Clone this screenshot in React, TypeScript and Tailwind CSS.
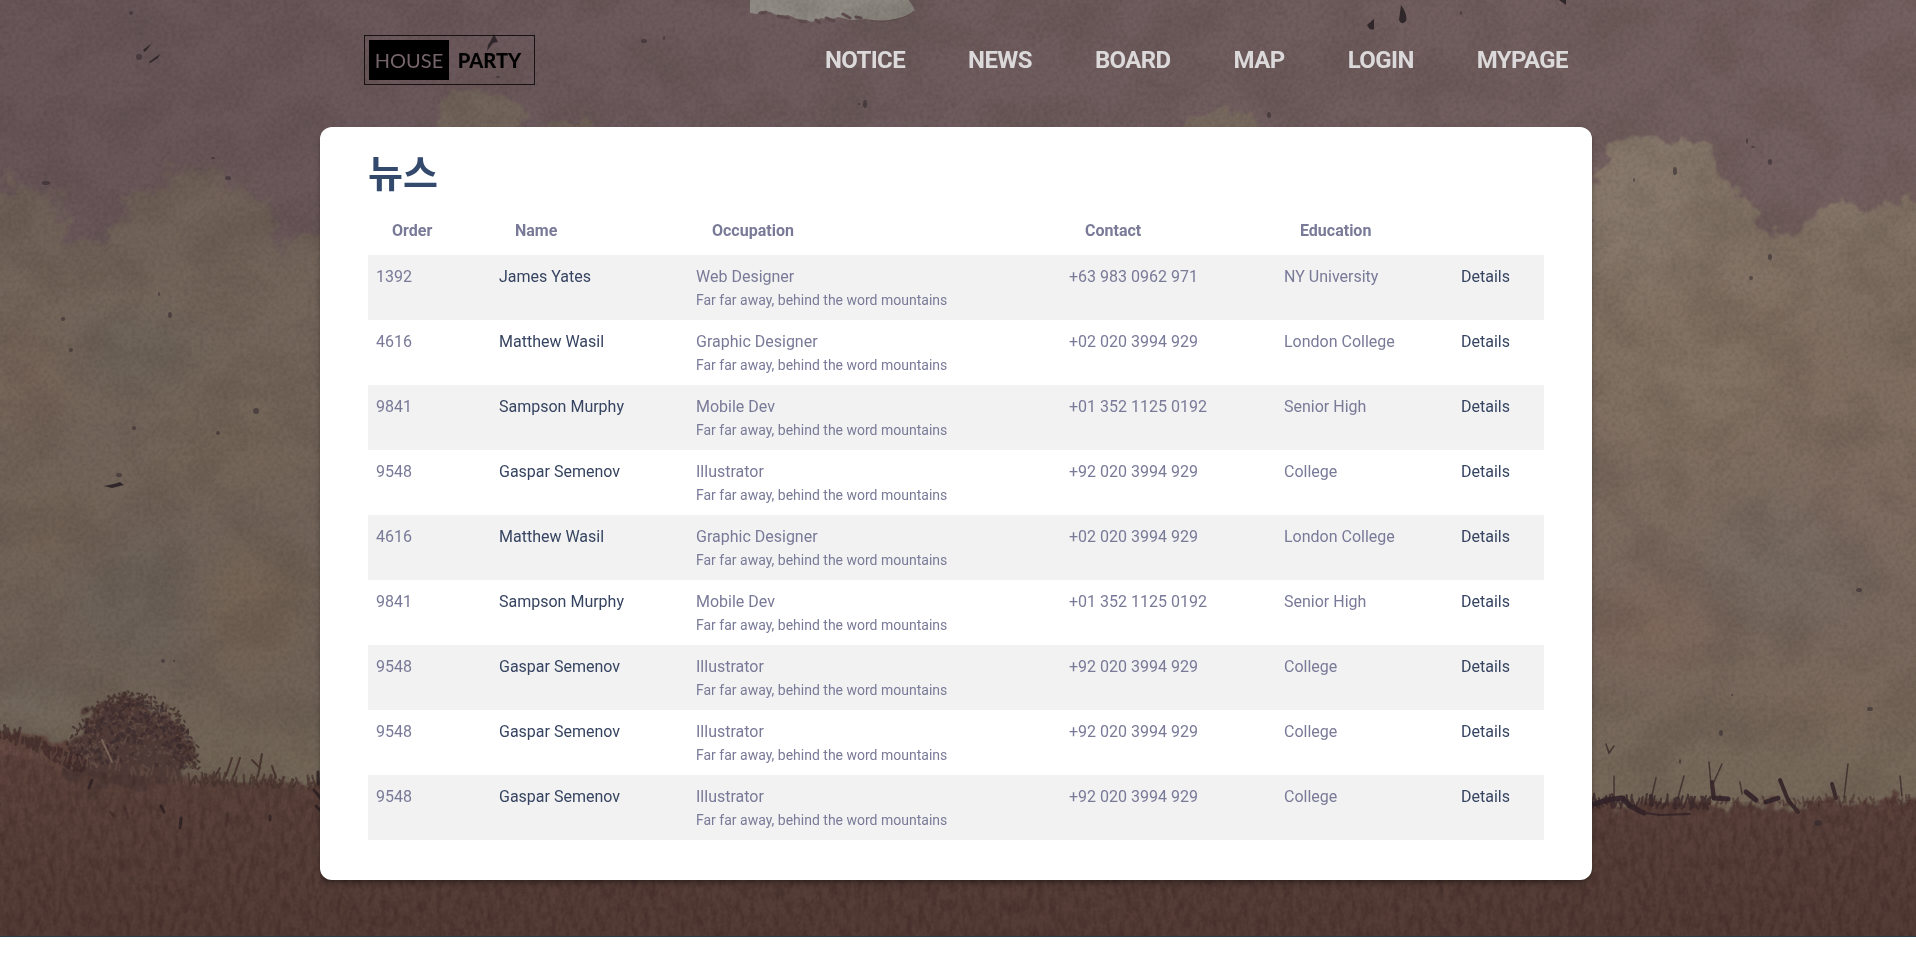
import React from "react";

type Person = {
  order: string;
  name: string;
  job: string;
  contact: string;
  education: string;
};

const james: Person = { order: "1392", name: "James Yates", job: "Web Designer", contact: "+63 983 0962 971", education: "NY University" };
const matthew: Person = { order: "4616", name: "Matthew Wasil", job: "Graphic Designer", contact: "+02 020 3994 929", education: "London College" };
const sampson: Person = { order: "9841", name: "Sampson Murphy", job: "Mobile Dev", contact: "+01 352 1125 0192", education: "Senior High" };
const gaspar: Person = { order: "9548", name: "Gaspar Semenov", job: "Illustrator", contact: "+92 020 3994 929", education: "College" };

const people: Person[] = [james, matthew, sampson, gaspar, matthew, sampson, gaspar, gaspar, gaspar];
const navItems = ["NOTICE", "NEWS", "BOARD", "MAP", "LOGIN", "MYPAGE"];
const headings = ["Order", "Name", "Occupation", "Contact", "Education"];

/* Small seeded generator, so that the painted grass is the same on every render. */
function seeded(seed: number) {
  let s = seed;
  return () => {
    s = (s * 16807) % 2147483647;
    return s / 2147483647;
  };
}

function blades(seed: number, x0: number, x1: number, y0: number, y1: number, count: number, height: number) {
  const rnd = seeded(seed);
  let d = "";
  for (let i = 0; i < count; i++) {
    const t = rnd();
    const x = x0 + (x1 - x0) * t;
    const y = y0 + (y1 - y0) * t + rnd() * 6;
    const h = 3 + rnd() * height;
    const lean = (rnd() - 0.5) * 7;
    d += `M${x.toFixed(1)} ${y.toFixed(1)}l${lean.toFixed(1)} ${(-h).toFixed(1)}`;
  }
  return d;
}

function leaves(seed: number, cx: number, cy: number, rx: number, ry: number, count: number, inner: number) {
  const rnd = seeded(seed);
  let d = "";
  for (let i = 0; i < count; i++) {
    const a = Math.PI + rnd() * Math.PI;
    const r = inner + (1.06 - inner) * Math.sqrt(rnd());
    const x = cx + Math.cos(a) * rx * r;
    const y = cy + Math.sin(a) * ry * r;
    d += `M${x.toFixed(1)} ${y.toFixed(1)}l${((rnd() - 0.5) * 5).toFixed(1)} ${((rnd() - 0.5) * 5).toFixed(1)}`;
  }
  return d;
}

const specks: [number, number, number, number][] = [
  [131, 13, 2, 2], [139, 57, 3, 3], [228, 178, 3, 2], [46, 183, 4, 2], [213, 158, 2, 1], [71, 350, 2, 2],
  [63, 319, 2, 2], [134, 428, 2, 2], [256, 411, 3, 3], [218, 433, 2, 2], [119, 475, 3, 2], [159, 294, 1, 2],
  [170, 315, 2, 3], [163, 661, 2, 2], [174, 661, 1, 1], [644, 41, 3, 2], [664, 38, 1, 2], [498, 77, 2, 1],
  [865, 104, 2, 4], [859, 104, 1, 1], [1269, 115, 2, 3], [1461, 13, 1, 2], [1747, 141, 1, 3],
  [1753, 147, 2, 1], [1770, 162, 2, 3], [1675, 171, 2, 4], [1634, 180, 1, 2], [1870, 709, 3, 2], [1721, 733, 2, 3],
  [1859, 590, 3, 2], [1732, 695, 1, 1], [1770, 257, 2, 3], [1751, 278, 2, 2], [1818, 823, 4, 3],
];

function Painting() {
  return (
    <svg className="absolute inset-0 h-full w-full" viewBox="0 0 1916 936" preserveAspectRatio="xMidYMid slice" aria-hidden="true">
      <defs>
        <linearGradient id="sky" x1="0" y1="0" x2="1" y2="0">
          <stop offset="0" stopColor="#695659" />
          <stop offset="0.45" stopColor="#6e5b5d" />
          <stop offset="1" stopColor="#746060" />
        </linearGradient>
        <linearGradient id="cloudLeft" x1="0" y1="0" x2="0" y2="1">
          <stop offset="0" stopColor="#6e5e57" />
          <stop offset="0.2" stopColor="#74665a" />
          <stop offset="0.75" stopColor="#706257" />
          <stop offset="1" stopColor="#736858" />
        </linearGradient>
        <linearGradient id="cloudRight" x1="0" y1="0" x2="0" y2="1">
          <stop offset="0" stopColor="#87786b" />
          <stop offset="0.3" stopColor="#817062" />
          <stop offset="0.7" stopColor="#79685d" />
          <stop offset="1" stopColor="#766959" />
        </linearGradient>
        <linearGradient id="field" x1="0" y1="0" x2="0" y2="1">
          <stop offset="0" stopColor="#62473f" />
          <stop offset="0.4" stopColor="#5a413b" />
          <stop offset="1" stopColor="#533b35" />
        </linearGradient>
        <filter id="rough" x="-5%" y="-5%" width="110%" height="110%" colorInterpolationFilters="sRGB">
          <feTurbulence type="fractalNoise" baseFrequency="0.05" numOctaves="5" seed="4" result="n" />
          <feDisplacementMap in="SourceGraphic" in2="n" scale="32" xChannelSelector="R" yChannelSelector="G" />
          <feGaussianBlur stdDeviation="1" />
        </filter>
        <filter id="wispy" x="-5%" y="-5%" width="110%" height="110%" colorInterpolationFilters="sRGB">
          <feTurbulence type="fractalNoise" baseFrequency="0.04" numOctaves="5" seed="12" result="n" />
          <feGaussianBlur in="SourceGraphic" stdDeviation="3" result="b" />
          <feDisplacementMap in="b" in2="n" scale="50" xChannelSelector="R" yChannelSelector="G" />
          <feGaussianBlur stdDeviation="1" />
        </filter>
        <filter id="soft" x="-50%" y="-50%" width="200%" height="200%" colorInterpolationFilters="sRGB">
          <feGaussianBlur stdDeviation="22" />
        </filter>
        <filter id="fine" x="-20%" y="-20%" width="140%" height="140%" colorInterpolationFilters="sRGB">
          <feGaussianBlur stdDeviation="0.7" />
        </filter>
        <filter id="grain" x="0" y="0" width="100%" height="100%" colorInterpolationFilters="sRGB">
          <feTurbulence type="fractalNoise" baseFrequency="0.25" numOctaves="3" seed="9" />
          <feColorMatrix type="matrix" values="0 0 0 0 0  0 0 0 0 0  0 0 0 0 0  1.6 0 0 0 -0.6" />
        </filter>
        <filter id="mottle" x="0" y="0" width="100%" height="100%" colorInterpolationFilters="sRGB">
          <feTurbulence type="fractalNoise" baseFrequency="0.016 0.02" numOctaves="5" seed="21" />
          <feColorMatrix type="matrix" values="0 0 0 0 0.3  0 0 0 0 0.25  0 0 0 0 0.22  0 3 0 0 -1.3" />
        </filter>
        <filter id="turf" x="0" y="0" width="100%" height="100%" colorInterpolationFilters="sRGB">
          <feTurbulence type="fractalNoise" baseFrequency="0.16 0.07" numOctaves="4" seed="31" />
          <feColorMatrix type="matrix" values="0 0 0 0 0.2  0 0 0 0 0.12  0 0 0 0 0.12  2 0 0 0 -0.8" />
        </filter>
        <clipPath id="ground">
          <path d="M0 752L60 768L190 780L320 786L900 794L1592 804L1720 802L1916 800V936H0Z" />
        </clipPath>
      </defs>

      <rect width="1916" height="936" fill="url(#sky)" />

      <g filter="url(#wispy)">
        <path d="M-30 186Q20 176 48 194Q60 226 80 244Q108 242 120 226Q112 200 124 194Q150 186 176 176Q196 160 220 174Q258 184 274 206Q284 224 266 242Q290 250 304 236Q330 238 340 234H960V820H-30Z" fill="url(#cloudLeft)" />
      </g>
      <g filter="url(#rough)">
        <path d="M940 240H1590V180Q1604 186 1608 150Q1624 132 1640 136Q1680 140 1706 146Q1724 168 1730 188Q1750 200 1754 222L1782 234L1800 238Q1808 212 1824 205Q1844 196 1862 208Q1880 196 1904 204L1960 214V830H940Z" fill="url(#cloudRight)" />
        <path d="M436 140L438 106Q448 94 472 90Q502 86 514 104L530 126Q560 124 582 122L606 140Z" fill="#72645b" />
        <path d="M1170 140Q1190 112 1222 108Q1252 112 1276 140Z" fill="#77685e" />
      </g>
      <path d="M750 -4V13L757 14L762 11L770 12L778 16L788 15L797 19L806 20L812 22L821 18L830 20L838 17L850 20L866 19L880 21Q904 20 915 11Q912 2 904 -4Z" fill="#8f8b84" filter="url(#fine)" />
      <path d="M760 13L766 12M778 16L788 18M800 21L806 22M816 20L820 23M826 18L834 21M843 14L850 18M856 17L861 18" fill="none" stroke="#5f4c4e" strokeWidth="3" strokeLinecap="round" filter="url(#fine)" />
      <path d="M870 21L886 21Q908 18 914 11" fill="none" stroke="#604e50" filter="url(#fine)" />

      <g filter="url(#soft)" opacity="0.55">
        <ellipse cx="130" cy="350" rx="70" ry="34" fill="#6a645b" />
        <ellipse cx="230" cy="440" rx="80" ry="40" fill="#786859" />
        <ellipse cx="30" cy="380" rx="50" ry="60" fill="#7a6559" />
        <ellipse cx="150" cy="600" rx="80" ry="60" fill="#69625c" />
        <ellipse cx="250" cy="610" rx="60" ry="70" fill="#786556" />
        <ellipse cx="60" cy="530" rx="60" ry="30" fill="#7a6758" />
        <ellipse cx="30" cy="700" rx="50" ry="18" fill="#7a7469" />
        <ellipse cx="200" cy="210" rx="50" ry="20" fill="#7a6a60" />
        <ellipse cx="1790" cy="560" rx="80" ry="60" fill="#756c64" />
        <ellipse cx="1650" cy="630" rx="60" ry="40" fill="#83685c" />
        <ellipse cx="1680" cy="390" rx="80" ry="60" fill="#877868" />
        <ellipse cx="1860" cy="500" rx="60" ry="50" fill="#806c62" />
        <ellipse cx="1640" cy="230" rx="50" ry="60" fill="#8d7e71" />
        <ellipse cx="1880" cy="300" rx="60" ry="80" fill="#7c6c60" />
        <ellipse cx="1830" cy="700" rx="90" ry="40" fill="#7c6a5c" />
      </g>

      <g filter="url(#rough)">
        <path d="M-20 722L20 728L60 744L100 754L160 770L198 780L330 786L900 796L1592 804L1716 802L1830 802L1960 800V970H-20Z" fill="url(#field)" />
        <path d="M68 774Q66 744 82 724Q100 700 126 698Q158 702 172 724Q196 738 194 758L184 780Q120 790 68 774Z" fill="#513c38" />
      </g>
      <g fill="none" strokeLinecap="round" filter="url(#fine)">
        <path d={leaves(17, 132, 770, 64, 74, 260, 0.6)} stroke="#432f2d" strokeWidth="2" opacity="0.8" />
        <path d={leaves(91, 132, 768, 58, 66, 200, 0.1)} stroke="#6a554d" strokeWidth="2" opacity="0.6" />
        <path d={leaves(53, 132, 768, 60, 66, 170, 0.1)} stroke="#382a2d" strokeWidth="3" opacity="0.6" />
        <path d={blades(7, 0, 84, 732, 768, 80, 10)} stroke="#402a2a" strokeWidth="3" opacity="0.7" />
        <path d={blades(77, 0, 200, 748, 782, 60, 8)} stroke="#70564b" strokeWidth="2" opacity="0.5" />
        <path d={blades(29, 190, 322, 780, 784, 60, 9)} stroke="#4a3530" strokeWidth="2" opacity="0.8" />
        <path d={blades(41, 1592, 1710, 802, 804, 80, 8)} stroke="#3b282b" strokeWidth="2" opacity="0.8" />
        <path d={blades(67, 1700, 1916, 802, 800, 60, 5)} stroke="#4c3431" strokeWidth="2" opacity="0.6" />
        <path d="M226 776L232 758M234 776L240 758M258 776L262 754M252 760L260 768M214 778L220 768M276 778L272 766" stroke="#4a3630" strokeWidth="2" />
        <path d="M102 740L112 762" stroke="#7a6658" strokeWidth="2" />
        <path d="M1614 798V776M1650 804L1656 778M1680 760V763M1678 798L1684 776M1712 798L1709 762M1713 784L1722 764M1742 794L1740 782M1844 798L1848 764M1902 796L1900 776M1606 744L1609 753L1614 746" stroke="#3a292a" strokeWidth="1.5" opacity="0.8" />
        <path d="M1712 782L1714 798M1780 780L1788 800L1798 812M1832 784L1836 798M1651 796V804" stroke="#3c2a2d" strokeWidth="4" />
        <path d="M1606 800L1622 798L1630 806L1644 813M1594 804L1608 800M1714 798L1728 799M1746 792L1756 800M1766 802L1778 798" stroke="#33242a" strokeWidth="5" opacity="0.9" />
        <path d="M1644 813L1660 815L1690 814" stroke="#3b2a2d" strokeWidth="2" />
        <path d="M318 772V784M314 790L322 800M316 806L322 812M161 806L164 812M181 818L180 828M270 816V820M92 780L89 788" stroke="#2c2024" strokeWidth="3" opacity="0.8" />
        <path d="M110 812L114 816M124 806L128 818M228 814L226 826" stroke="#432d2b" strokeWidth="3" opacity="0.6" />
      </g>

      <g clipPath="url(#ground)">
        <rect y="740" width="1916" height="196" filter="url(#turf)" opacity="0.4" />
      </g>
      <rect width="1916" height="800" filter="url(#mottle)" opacity="0.16" />
      <rect width="1916" height="936" filter="url(#grain)" opacity="0.1" />

      <g fill="#30272b" filter="url(#fine)">
        {specks.map(([x, y, rx, ry], i) => (
          <ellipse key={i} cx={x} cy={y} rx={rx} ry={ry} opacity="0.55" />
        ))}
        <path d="M1401 5Q1408 15 1406 21Q1401 26 1399 20ZM1367 25L1374 19V29Q1370 31 1367 25ZM1559 0L1566 5V-2Z" />
        <path d="M490 42L494 34L498 42L493 43L487 51L488 45ZM143 50L152 43L145 52ZM149 62L160 54L158 58L150 63ZM104 486L114 484L120 482L124 485L112 488Z" />
        <path d="M1535 254L1530 259L1528 266" fill="none" stroke="#5a4a44" />
      </g>
    </svg>
  );
}

function Logo() {
  return (
    <a href="#home" aria-label="House Party" className="flex h-[50px] w-[171px] items-center border border-[#171315] p-1 font-[Lato,sans-serif]">
      <span className="flex h-10 w-20 items-center justify-center bg-black text-[20px] leading-5 text-[#75656a]">HOUSE</span>
      <span className="flex-1 text-center text-[20px] leading-5 font-black text-black">PARTY</span>
    </a>
  );
}

export default function App() {
  return (
    <div className="min-h-screen bg-white font-[Roboto,'Noto_Sans_CJK_KR',sans-serif]">
      <div className="relative border-b border-[#2b3d47] bg-[#55403b]">
        <Painting />
        <div className="relative pr-1 pb-14">
          <header className="mx-auto flex max-w-[1272px] items-start justify-between pt-[35px] pr-6 pb-[42px] pl-11">
            <Logo />
            <nav className="flex h-[50px] items-center gap-[63px]">
              {navItems.map((item) => (
                <a key={item} href={`#${item.toLowerCase()}`} className="text-2xl font-bold tracking-tight text-[#dbd9da]">
                  {item}
                </a>
              ))}
            </nav>
          </header>

          <main className="mx-auto max-w-[1272px] rounded-xl bg-white px-12 pt-6 pb-10 shadow-md shadow-black/30">
            <h1 className="h-[62px] text-[38px] leading-[46px] font-bold text-[#334a6c]">뉴스</h1>
            <table className="w-full table-fixed border-collapse text-left text-base leading-6 text-[#797a98]">
              <colgroup>
                <col className="w-[123px]" />
                <col className="w-[197px]" />
                <col className="w-[373px]" />
                <col className="w-[215px]" />
                <col className="w-[177px]" />
                <col className="w-[91px]" />
              </colgroup>
              <thead>
                <tr className="h-[42px]">
                  {headings.map((h) => (
                    <th key={h} scope="col" className="pb-[7px] pl-6 align-middle font-bold">
                      {h}
                    </th>
                  ))}
                  <td />
                </tr>
              </thead>
              <tbody>
                {people.map((p, i) => (
                  <tr key={i} className="h-[65px] align-top odd:bg-[#f2f2f2]">
                    <td className="px-2 pt-[10px]">{p.order}</td>
                    <td className="px-2 pt-[10px]">
                      <a href={`#person-${i + 1}`} className="text-[#364461]">{p.name}</a>
                    </td>
                    <td className="px-2 pt-[10px]">
                      {p.job}
                      <small className="block text-sm leading-[22px]">Far far away, behind the word mountains</small>
                    </td>
                    <td className="px-2 pt-[10px]">{p.contact}</td>
                    <td className="px-2 pt-[10px]">{p.education}</td>
                    <td className="px-2 pt-[10px]">
                      <a href={`#details-${i + 1}`} className="text-[#364461]">Details</a>
                    </td>
                  </tr>
                ))}
              </tbody>
            </table>
          </main>
        </div>
      </div>
    </div>
  );
}
